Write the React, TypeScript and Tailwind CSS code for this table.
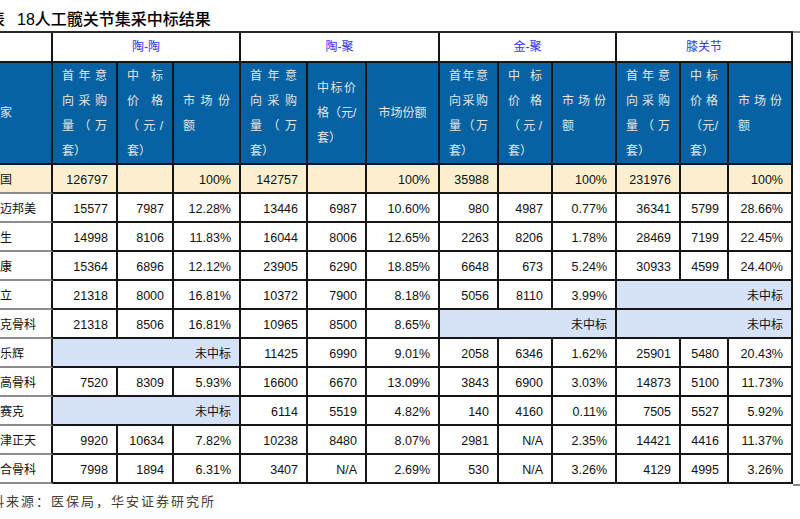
import React from "react";

type Group = [string, string, string] | null;

interface Row {
  name: string;
  total?: boolean;
  g: Group[];
}

const groups = ["陶-陶", "陶-聚", "金-聚", "膝关节"];

// header text, line by line (each line but the last is spread across the cell)
const heads: string[][][] = [
  [["首年意", "向采购", "量（万", "套）"], ["中标", "价格", "（元/", "套）"], ["市场份", "额"]],
  [["首年意", "向采购", "量（万", "套）"], ["中标价", "格（元/", "套）"], ["市场份额"]],
  [["首年意", "向采购", "量（万", "套）"], ["中标", "价格", "（元/", "套）"], ["市场份", "额"]],
  [["首年意", "向采购", "量（万", "套）"], ["中标", "价格", "（元/", "套）"], ["市场份", "额"]],
];

const rows: Row[] = [
  { name: "全国", total: true, g: [["126797", "", "100%"], ["142757", "", "100%"], ["35988", "", "100%"], ["231976", "", "100%"]] },
  { name: "捷迈邦美", g: [["15577", "7987", "12.28%"], ["13446", "6987", "10.60%"], ["980", "4987", "0.77%"], ["36341", "5799", "28.66%"]] },
  { name: "强生", g: [["14998", "8106", "11.83%"], ["16044", "8006", "12.65%"], ["2263", "8206", "1.78%"], ["28469", "7199", "22.45%"]] },
  { name: "爱康", g: [["15364", "6896", "12.12%"], ["23905", "6290", "18.85%"], ["6648", "673", "5.24%"], ["30933", "4599", "24.40%"]] },
  { name: "春立", g: [["21318", "8000", "16.81%"], ["10372", "7900", "8.18%"], ["5056", "8110", "3.99%"], null] },
  { name: "林克骨科", g: [["21318", "8506", "16.81%"], ["10965", "8500", "8.65%"], null, null] },
  { name: "施乐辉", g: [null, ["11425", "6990", "9.01%"], ["2058", "6346", "1.62%"], ["25901", "5480", "20.43%"]] },
  { name: "威高骨科", g: [["7520", "8309", "5.93%"], ["16600", "6670", "13.09%"], ["3843", "6900", "3.03%"], ["14873", "5100", "11.73%"]] },
  { name: "史赛克", g: [null, ["6114", "5519", "4.82%"], ["140", "4160", "0.11%"], ["7505", "5527", "5.92%"]] },
  { name: "天津正天", g: [["9920", "10634", "7.82%"], ["10238", "8480", "8.07%"], ["2981", "N/A", "2.35%"], ["14421", "4416", "11.37%"]] },
  { name: "联合骨科", g: [["7998", "1894", "6.31%"], ["3407", "N/A", "2.69%"], ["530", "N/A", "3.26%"], ["4129", "4995", "3.26%"]] },
];

function HeadCell({ lines }: { lines: string[] }) {
  return (
    <div className="flex h-[102px] flex-col justify-center border-r-2 border-b-2 border-[#161616] bg-[#0662a3] px-[9px] text-[12px] text-[#e4e4e4]">
      {lines.map((line, i) => (
        <div
          key={i}
          className={
            lines.length === 1
              ? "flex h-[25px] items-center justify-center"
              : i < lines.length - 1
                ? "flex h-[25px] items-center justify-between"
                : "flex h-[25px] items-center justify-start"
          }
        >
          {Array.from(line).map((ch, j) => (
            <span key={j}>{ch}</span>
          ))}
        </div>
      ))}
    </div>
  );
}

export default function App() {
  return (
    <div className="h-[519px] w-[800px] overflow-hidden bg-white text-[#111] [font-family:'Liberation_Sans','Noto_Sans_CJK_SC',sans-serif]">
      <div className="ml-[-13px] w-[813px]">
        <div className="flex h-[31px] items-start pt-[9px] pl-[2px] text-[16px] leading-[22px] font-medium text-black">
          <span>表</span>
          <span className="ml-[12px]">18人工髋关节集采中标结果</span>
        </div>

        <div className="flex items-start">
          <div className="grid grid-cols-[66px_65px_56px_67px_67px_59px_73px_59px_54px_64px_64px_48px_64px] border-t-2 border-[#2a2a2a]">
            {/* group row */}
            <div className="h-[30px] border-r-2 border-b-2 border-[#161616]" />
            {groups.map((g) => (
              <div
                key={g}
                className="col-span-3 flex h-[30px] items-center justify-center border-r-2 border-b-2 border-[#161616] text-[12px] text-[#3535f5]"
              >
                {g}
              </div>
            ))}

            {/* blue header */}
            <div className="flex h-[102px] items-center border-r-2 border-b-2 border-[#161616] bg-[#0662a3] pl-[1px] text-[12px] text-[#e4e4e4]">
              厂家
            </div>
            {heads.map((grp, gi) =>
              grp.map((lines, ci) => <HeadCell key={`${gi}-${ci}`} lines={lines} />)
            )}

            {/* body */}
            {rows.map((r) => (
              <React.Fragment key={r.name}>
                <div
                  className={
                    r.total
                      ? "flex h-[29px] items-center border-r-2 border-b-2 border-r-[#161616] border-b-[#8c8c8c] bg-[#fcefd0] pt-[2px] pl-[1px] text-[12px] whitespace-nowrap"
                      : "flex h-[29px] items-center border-r-2 border-b-2 border-r-[#161616] border-b-[#8c8c8c] bg-white pt-[2px] pl-[1px] text-[12px] whitespace-nowrap"
                  }
                >
                  {r.name}
                </div>
                {r.g.map((cells, gi) =>
                  cells === null ? (
                    <div
                      key={gi}
                      className="col-span-3 flex h-[29px] items-center justify-end border-r-2 border-b-2 border-[#161616] bg-[#d5e2f8] pt-[2px] pr-[8px] text-[12px]"
                    >
                      未中标
                    </div>
                  ) : (
                    cells.map((v, ci) => (
                      <div
                        key={`${gi}-${ci}`}
                        className={
                          r.total
                            ? "flex h-[29px] items-center justify-end border-r-2 border-b-2 border-[#161616] bg-[#fcefd0] pt-[3px] pr-[8px] text-[12.5px]"
                            : "flex h-[29px] items-center justify-end border-r-2 border-b-2 border-[#161616] bg-white pt-[3px] pr-[8px] text-[12.5px]"
                        }
                      >
                        {v}
                      </div>
                    ))
                  )
                )}
              </React.Fragment>
            ))}
          </div>
          <div className="h-[455px] flex-1 border-t-2 border-b-2 border-[#8a8a8a]" />
        </div>

        <div className="mt-[6px] ml-[-11px] text-[13px] leading-[20px] tracking-[2px] text-[#463e2e]">
          资料来源：医保局，华安证券研究所
        </div>
      </div>
    </div>
  );
}
